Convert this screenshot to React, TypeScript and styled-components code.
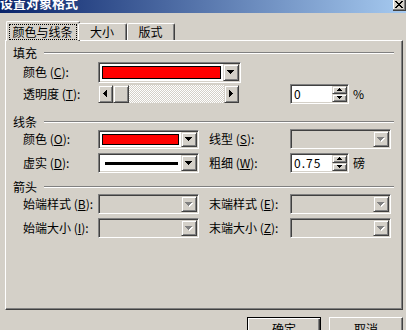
import styled, { createGlobalStyle } from "styled-components";

const GlobalStyle = createGlobalStyle`
  html, body {
    margin: 0;
    padding: 0;
    background: #d4d0c8;
  }
  body {
    font-family: "Noto Sans CJK SC", "Liberation Sans", sans-serif;
    font-size: 12px;
    color: #000;
  }
`;

const DOWN = "M0 0h7v1H0zM1 1h5v1H1zM2 2h3v1H2zM3 3h1v1H3z";
const LEFT = "M3 0h1v7H3zM2 1h1v5H2zM1 2h1v3H1zM0 3h1v1H0z";
const RIGHT = "M0 0h1v7H0zM1 1h1v5H1zM2 2h1v3H2zM3 3h1v1H3z";
const SPIN_UP = "M2 0h1v1H2zM1 1h3v1H1zM0 2h5v1H0z";
const SPIN_DOWN = "M0 0h5v1H0zM1 1h3v1H1zM2 2h1v1H2z";
const CLOSE =
  "M0 0h2v1H0zM6 0h2v1H6zM1 1h2v1H1zM5 1h2v1H5zM2 2h4v1H2zM3 3h2v1H3zM2 4h4v1H2zM1 5h2v1H1zM5 5h2v1H5zM0 6h2v1H0zM6 6h2v1H6z";

const Px = styled.svg`
  display: block;
  shape-rendering: crispEdges;
`;

function Glyph({ d, w, h, disabled }: { d: string; w: number; h: number; disabled?: boolean }) {
  return (
    <Px width={w + 1} height={h + 1} viewBox={`0 0 ${w + 1} ${h + 1}`}>
      {disabled && <path d={d} fill="#fff" transform="translate(1 1)" />}
      <path d={d} fill={disabled ? "#808080" : "#000"} />
    </Px>
  );
}

const Window = styled.div`
  width: 406px;
  height: 330px;
  overflow: hidden;
  background: #d4d0c8;
  display: flex;
  flex-direction: column;
`;

const TitleBar = styled.div`
  flex: none;
  height: 13px;
  overflow: hidden;
  display: flex;
  justify-content: space-between;
  align-items: flex-start;
  background: linear-gradient(90deg, #0a246a 0%, #a6caf0 100%);
`;

const Title = styled.span`
  color: #fff;
  font-weight: bold;
  font-size: 13px;
  line-height: 13px;
  margin-top: -4px;
  white-space: nowrap;
`;

const CloseButton = styled.div`
  box-sizing: border-box;
  width: 13px;
  height: 11px;
  background: #d4d0c8;
  border-right: 1px solid #404040;
  border-bottom: 1px solid #404040;
  box-shadow: inset -1px -1px #808080, inset 1px 0 #fff;
  display: flex;
  align-items: center;
  justify-content: center;
  padding-bottom: 1px;
`;

const Body = styled.div`
  flex: 1;
  display: flex;
  flex-direction: column;
  padding: 8px 3px 0 5px;
`;

const TabStrip = styled.div`
  display: flex;
  align-items: flex-end;
  height: 19px;
  padding-left: 3px;
  position: relative;
  z-index: 1;
`;

const Tab = styled.div<{ $active?: boolean; $w: number }>`
  box-sizing: border-box;
  width: ${(p) => p.$w}px;
  height: ${(p) => (p.$active ? 20 : 17)}px;
  margin: 0 ${(p) => (p.$active ? -2 : 0)}px ${(p) => (p.$active ? -1 : 0)}px;
  background: #d4d0c8;
  border: 1px solid;
  border-color: #fff #404040 transparent #fff;
  border-bottom: none;
  border-radius: 2px 2px 0 0;
  box-shadow: inset -1px 0 #808080;
  display: flex;
  align-items: center;
  justify-content: center;
`;

const TabLabel = styled.span<{ $focus?: boolean }>`
  line-height: 12px;
  padding: 1px 3px 1px 2px;
  border: 1px dotted ${(p) => (p.$focus ? "#000" : "transparent")};
  white-space: nowrap;
`;

const Panel = styled.div`
  box-sizing: border-box;
  height: 270px;
  border: 1px solid;
  border-color: #fff #404040 #404040 #fff;
  box-shadow: inset -1px -1px #808080;
  padding: 7px 8px 0 7px;
`;

const Group = styled.div<{ $mt: number }>`
  margin-top: ${(p) => p.$mt}px;
`;

const GroupHeader = styled.div`
  display: flex;
  align-items: center;
  height: 10px;
  line-height: 10px;
  gap: 7px;
  white-space: nowrap;

  &::after {
    content: "";
    flex: 1;
    height: 0;
    border-top: 1px solid #808080;
    border-bottom: 1px solid #fff;
  }
`;

const Rows = styled.div<{ $top: number; $gap: number }>`
  display: flex;
  flex-direction: column;
  margin-top: ${(p) => p.$top}px;
  gap: ${(p) => p.$gap}px;
  padding-left: 10px;
`;

const Row = styled.div`
  display: flex;
  align-items: center;
  height: 22px;
`;

const LeftCell = styled.div`
  display: flex;
  align-items: center;
  width: 186px;
  flex: none;
`;

const RightCell = styled.div`
  display: flex;
  align-items: center;
`;

const Label = styled.span<{ $w?: number }>`
  width: ${(p) => p.$w ?? 75}px;
  flex: none;
  white-space: nowrap;
  line-height: 12px;
`;

const Sunken = styled.div<{ $w: number; $h: number; $disabled?: boolean }>`
  box-sizing: border-box;
  width: ${(p) => p.$w}px;
  height: ${(p) => p.$h}px;
  flex: none;
  display: flex;
  padding: 1px;
  border: 1px solid;
  border-color: #808080 #fff #fff #808080;
  box-shadow: inset 1px 1px #404040, inset -1px -1px #d4d0c8;
  background: ${(p) => (p.$disabled ? "#d4d0c8" : "#fff")};
`;

const Field = styled.div`
  flex: 1;
  display: flex;
  align-items: center;
  padding: 2px;
  min-width: 0;
`;

const Swatch = styled.div`
  align-self: stretch;
  flex: 1;
  background: #ff0000;
  border: 1px solid #000;
`;

const LineSample = styled.div`
  flex: 1;
  height: 3px;
  margin: 0 1px 0 3px;
  background: #000;
`;

const Raised = styled.div<{ $w: number }>`
  box-sizing: border-box;
  width: ${(p) => p.$w}px;
  flex: none;
  align-self: stretch;
  background: #d4d0c8;
  border: 1px solid;
  border-color: #d4d0c8 #404040 #404040 #d4d0c8;
  box-shadow: inset 1px 1px #fff, inset -1px -1px #808080;
  display: flex;
  align-items: center;
  justify-content: center;
`;

const ScrollBar = styled.div`
  width: 141px;
  height: 18px;
  flex: none;
  display: flex;
  background: repeating-conic-gradient(#fff 0 25%, #d4d0c8 0 50%) 0 0 / 2px 2px;
`;

const ScrollTrack = styled.div`
  flex: 1;
`;

const SpinText = styled.div`
  flex: 1;
  padding-left: 2px;
  display: flex;
  align-items: center;
  line-height: 12px;
  letter-spacing: 1px;
`;

const SpinButtons = styled.div`
  width: 15px;
  flex: none;
  display: flex;
  flex-direction: column;
`;

const SpinButton = styled(Raised)`
  flex: 1;
  width: 15px;
`;

const Unit = styled.span`
  margin-left: 4px;
  line-height: 12px;
`;

const ButtonBar = styled.div`
  display: flex;
  justify-content: flex-end;
  gap: 8px;
  margin-top: 7px;
`;

const PushButton = styled.button<{ $default?: boolean }>`
  box-sizing: border-box;
  width: 74px;
  height: 23px;
  padding: 0;
  font: inherit;
  color: #000;
  background: #d4d0c8;
  border: 1px solid;
  border-color: ${(p) => (p.$default ? "#000" : "#fff #404040 #404040 #fff")};
  box-shadow: ${(p) =>
    p.$default
      ? "inset 1px 1px #fff, inset -1px -1px #404040, inset -2px -2px #808080"
      : "inset -1px -1px #808080"};
  line-height: 12px;
`;

function Combo({ w, h, children, disabled }: { w: number; h: number; children?: React.ReactNode; disabled?: boolean }) {
  return (
    <Sunken $w={w} $h={h} $disabled={disabled}>
      <Field>{children}</Field>
      <Raised $w={16}>
        <Glyph d={DOWN} w={7} h={4} disabled={disabled} />
      </Raised>
    </Sunken>
  );
}

function Spin({ value }: { value: string }) {
  return (
    <Sunken $w={59} $h={20}>
      <SpinText>{value}</SpinText>
      <SpinButtons>
        <SpinButton $w={15}>
          <Glyph d={SPIN_UP} w={5} h={3} />
        </SpinButton>
        <SpinButton $w={15}>
          <Glyph d={SPIN_DOWN} w={5} h={3} />
        </SpinButton>
      </SpinButtons>
    </Sunken>
  );
}

export default function App() {
  return (
    <>
      <GlobalStyle />
      <Window>
        <TitleBar>
          <Title>设置对象格式</Title>
          <CloseButton>
            <Glyph d={CLOSE} w={8} h={7} />
          </CloseButton>
        </TitleBar>
        <Body>
          <TabStrip>
            <Tab $active $w={74}>
              <TabLabel $focus>颜色与线条</TabLabel>
            </Tab>
            <Tab $w={49}>
              <TabLabel>大小</TabLabel>
            </Tab>
            <Tab $w={48}>
              <TabLabel>版式</TabLabel>
            </Tab>
          </TabStrip>
          <Panel>
            <Group $mt={0}>
              <GroupHeader>填充</GroupHeader>
              <Rows $top={3} $gap={0}>
                <Row>
                  <Label>颜色 (<u>C</u>):</Label>
                  <Combo w={143} h={21}>
                    <Swatch />
                  </Combo>
                </Row>
                <Row>
                  <LeftCell>
                    <Label>透明度 (<u>T</u>):</Label>
                    <ScrollBar>
                      <Raised $w={15}>
                        <Glyph d={LEFT} w={4} h={7} />
                      </Raised>
                      <Raised $w={16} />
                      <ScrollTrack />
                      <Raised $w={15}>
                        <Glyph d={RIGHT} w={4} h={7} />
                      </Raised>
                    </ScrollBar>
                  </LeftCell>
                  <RightCell>
                    <Label $w={81} />
                    <Spin value="0" />
                    <Unit>%</Unit>
                  </RightCell>
                </Row>
              </Rows>
            </Group>

            <Group $mt={12}>
              <GroupHeader>线条</GroupHeader>
              <Rows $top={1} $gap={2}>
                <Row>
                  <LeftCell>
                    <Label>颜色 (<u>O</u>):</Label>
                    <Combo w={101} h={19}>
                      <Swatch />
                    </Combo>
                  </LeftCell>
                  <RightCell>
                    <Label $w={81}>线型 (<u>S</u>):</Label>
                    <Combo w={101} h={20} disabled />
                  </RightCell>
                </Row>
                <Row>
                  <LeftCell>
                    <Label>虚实 (<u>D</u>):</Label>
                    <Combo w={101} h={20}>
                      <LineSample />
                    </Combo>
                  </LeftCell>
                  <RightCell>
                    <Label $w={81}>粗细 (<u>W</u>):</Label>
                    <Spin value="0.75" />
                    <Unit>磅</Unit>
                  </RightCell>
                </Row>
              </Rows>
            </Group>

            <Group $mt={8}>
              <GroupHeader>箭头</GroupHeader>
              <Rows $top={1} $gap={2}>
                <Row>
                  <LeftCell>
                    <Label>始端样式 (<u>B</u>):</Label>
                    <Combo w={101} h={20} disabled />
                  </LeftCell>
                  <RightCell>
                    <Label $w={81}>末端样式 (<u>E</u>):</Label>
                    <Combo w={101} h={20} disabled />
                  </RightCell>
                </Row>
                <Row>
                  <LeftCell>
                    <Label>始端大小 (<u>I</u>):</Label>
                    <Combo w={101} h={20} disabled />
                  </LeftCell>
                  <RightCell>
                    <Label $w={81}>末端大小 (<u>Z</u>):</Label>
                    <Combo w={101} h={20} disabled />
                  </RightCell>
                </Row>
              </Rows>
            </Group>
          </Panel>
          <ButtonBar>
            <PushButton $default>确定</PushButton>
            <PushButton>取消</PushButton>
          </ButtonBar>
        </Body>
      </Window>
    </>
  );
}
